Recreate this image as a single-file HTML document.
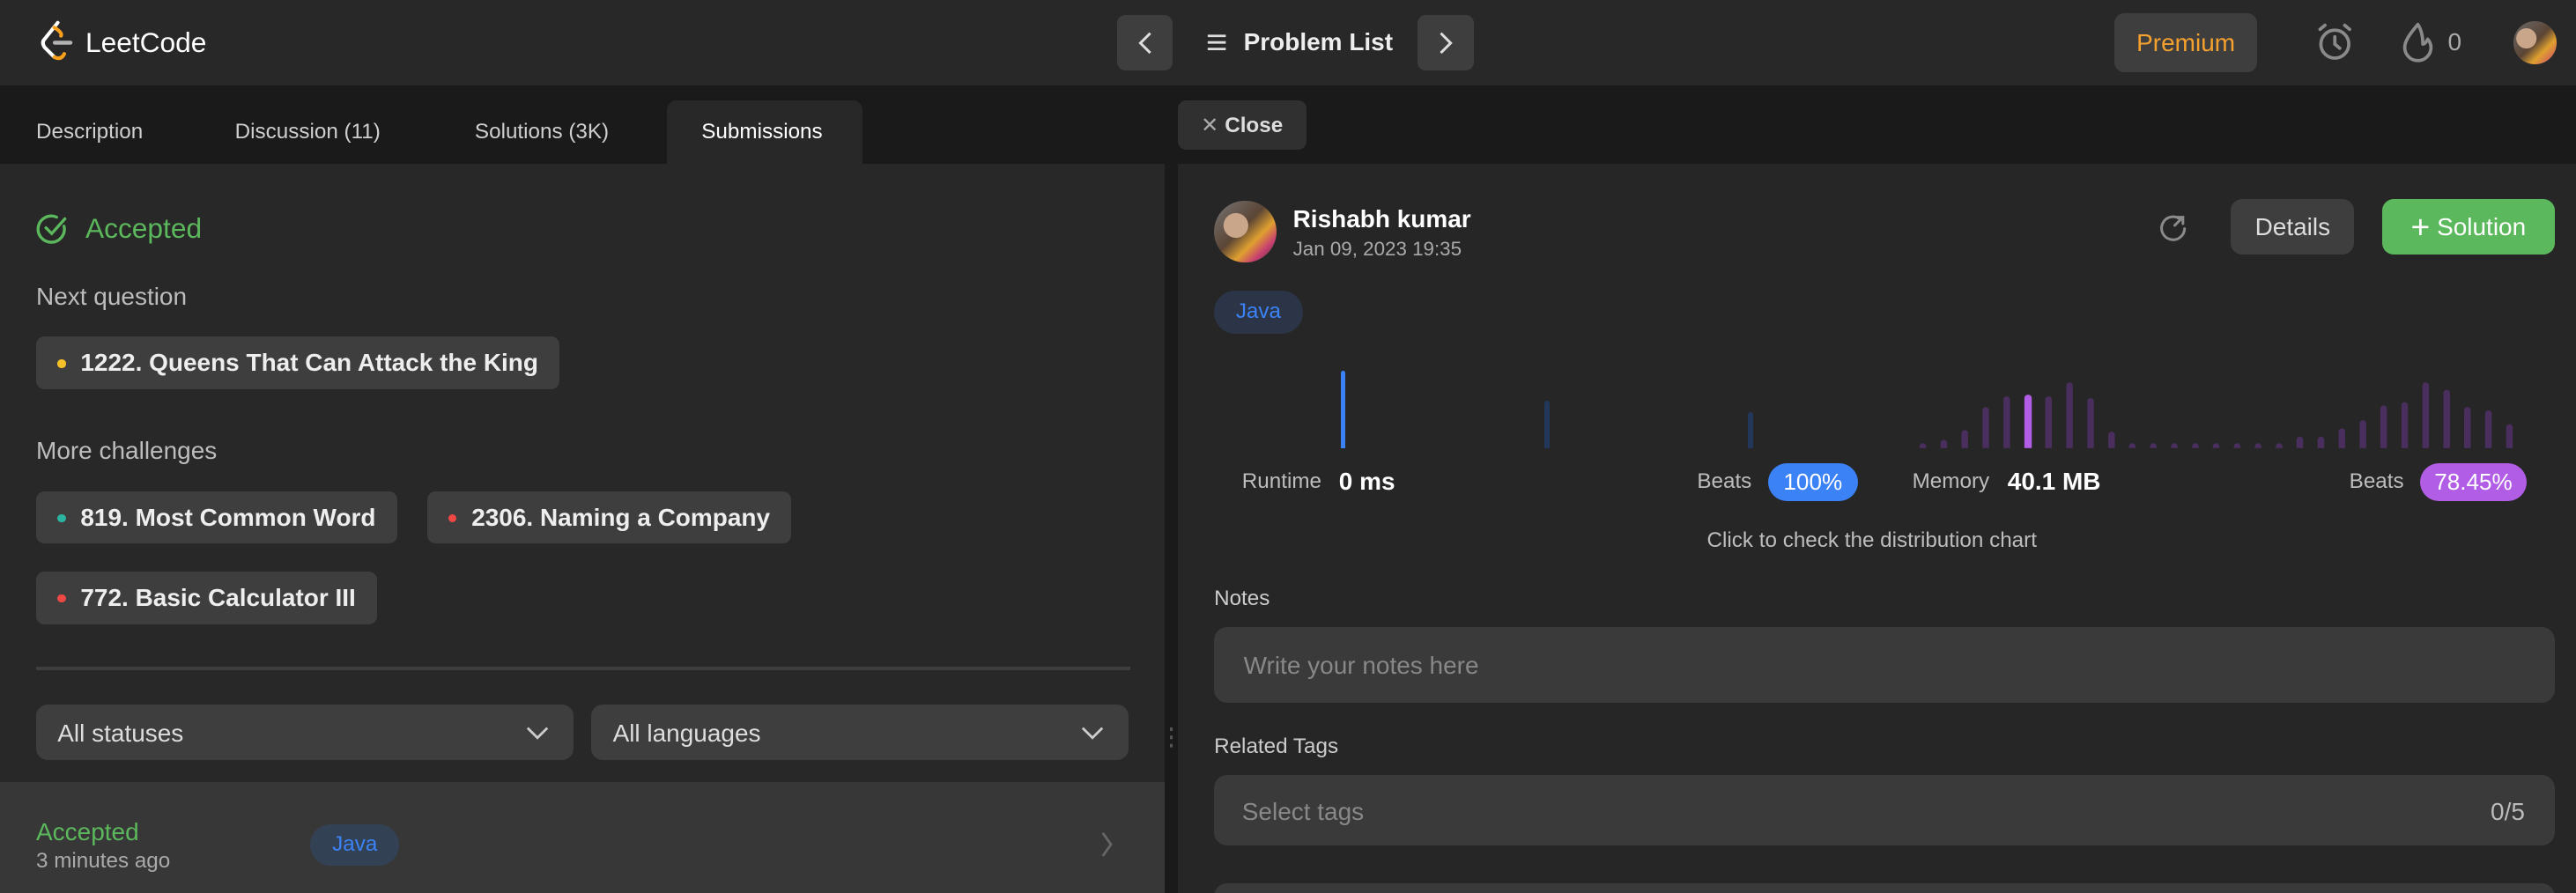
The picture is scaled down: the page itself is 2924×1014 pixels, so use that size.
<!DOCTYPE html>
<html><head><meta charset="utf-8"><style>
html,body{margin:0;padding:0;background:#1a1a1a;width:2924px;height:1014px;overflow:hidden}
#w{zoom:1.8648;width:1568px;height:544px;position:relative;font-family:"Liberation Sans",sans-serif;color:#eee;overflow:hidden}
.a{position:absolute}
.t{white-space:nowrap}
.chip{position:absolute;background:#3e3e3e;border-radius:5px;height:32px;font-size:15px;font-weight:bold;color:#eee;line-height:32px;padding:0 13px 0 27px;white-space:nowrap}
.chip i{position:absolute;left:13px;top:14px;width:5px;height:5px;border-radius:50%}
.bar{position:absolute;bottom:271px;width:3px;border-radius:2px 2px 0 0}
</style></head><body><div id="w">
<div class="a" style="left:0;top:0;width:1568px;height:52px;background:#282828"></div>
<svg class="a" style="left:24px;top:12px" width="22" height="26" viewBox="0 0 22 26"><path d="M11 2 L3 12 Q1 14 3 17 L9 23" stroke="#fff" stroke-width="2.2" fill="none" stroke-linecap="round"/><path d="M9 5 Q14 8 13 10 M9 23 Q13 25 15 21" stroke="#f89f1b" stroke-width="2.2" fill="none" stroke-linecap="round"/><rect x="8" y="13" width="12" height="2.4" rx="1.2" fill="#b3b3b3"/></svg>
<div class="a t" style="left:52px;top:16px;font-size:17px;color:#fff">LeetCode</div>
<div class="a" style="left:680px;top:9px;width:34px;height:34px;background:#3e3e3e;border-radius:5px"></div>
<svg class="a" style="left:690px;top:18px" width="14" height="16"><path d="M10 2 L4 8 L10 14" stroke="#ddd" stroke-width="1.6" fill="none"/></svg>
<svg class="a" style="left:734px;top:20px" width="13" height="12"><path d="M1 2H12M1 6H12M1 10H12" stroke="#ddd" stroke-width="1.5"/></svg>
<div class="a t" style="left:757px;top:17px;font-size:15px;font-weight:bold;color:#eee">Problem List</div>
<div class="a" style="left:863px;top:9px;width:34px;height:34px;background:#3e3e3e;border-radius:5px"></div>
<svg class="a" style="left:873px;top:18px" width="14" height="16"><path d="M4 2 L10 8 L4 14" stroke="#ddd" stroke-width="1.6" fill="none"/></svg>
<div class="a t" style="left:1287px;top:8px;width:87px;height:36px;background:#3e3e3e;border-radius:6px;color:#f5a12e;font-size:15px;line-height:36px;text-align:center">Premium</div>
<svg class="a" style="left:1408px;top:13px" width="26" height="26" viewBox="0 0 26 26"><circle cx="13" cy="14" r="8.5" stroke="#8a8a8a" stroke-width="2" fill="none"/><path d="M13 9.5V14L16 16.5M4 5L7 2.5M22 5L19 2.5" stroke="#8a8a8a" stroke-width="2" fill="none" stroke-linecap="round"/></svg>
<svg class="a" style="left:1461px;top:13px" width="22" height="26" viewBox="0 0 22 26"><path d="M11 2 C 6 8 3 12 3 16 a8 8 0 0 0 16 0 c0-2-1-4-2-5 c-1 2-2 3-3 3 C14 9 13 5 11 2Z" stroke="#8a8a8a" stroke-width="2" fill="none" stroke-linejoin="round"/></svg>
<div class="a t" style="left:1490px;top:17px;font-size:15px;color:#aaa">0</div>
<div class="a" style="left:1530px;top:13px;width:26px;height:26px;border-radius:50%;background:radial-gradient(circle at 30% 40%,#c9a58a 0 25%,transparent 26%),linear-gradient(135deg,#6a6a6a,#5b4535 50%,#e0a030 70%,#c84070)"></div>

<div class="a" style="left:406px;top:61px;width:119px;height:39px;background:#282828;border-radius:6px 6px 0 0"></div>
<div class="a t" style="left:22px;top:73px;font-size:13px;color:#cfcfcf">Description</div>
<div class="a t" style="left:143px;top:73px;font-size:13px;color:#cfcfcf">Discussion (11)</div>
<div class="a t" style="left:289px;top:73px;font-size:13px;color:#cfcfcf">Solutions (3K)</div>
<div class="a t" style="left:427px;top:73px;font-size:13px;color:#fff">Submissions</div>
<div class="a" style="left:717px;top:61px;width:78px;height:30px;background:#303030;border-radius:5px"></div>
<div class="a t" style="left:731px;top:68px;font-size:13px;color:#ddd;font-weight:bold"><span style="font-weight:normal;color:#aaa">✕</span> Close</div>

<div class="a" style="left:0;top:100px;width:709px;height:444px;background:#282828"></div>
<svg class="a" style="left:22px;top:129px" width="20" height="20" viewBox="0 0 20 20"><path d="M17 8.5 A8 8 0 1 1 12.5 3" stroke="#5cb85c" stroke-width="1.8" fill="none" stroke-linecap="round"/><path d="M6 9.5 L9.5 13 L17.5 4" stroke="#5cb85c" stroke-width="1.8" fill="none" stroke-linecap="round"/></svg>
<div class="a t" style="left:52px;top:129px;font-size:17px;color:#5cb85c">Accepted</div>
<div class="a t" style="left:22px;top:172px;font-size:15px;color:#bdbdbd">Next question</div>
<div class="chip" style="left:22px;top:205px"><i style="background:#f5c027"></i>1222. Queens That Can Attack the King</div>
<div class="a t" style="left:22px;top:266px;font-size:15px;color:#bdbdbd">More challenges</div>
<div class="chip" style="left:22px;top:299px"><i style="background:#2bb5a0"></i>819. Most Common Word</div>
<div class="chip" style="left:260px;top:299px"><i style="background:#ef4743"></i>2306. Naming a Company</div>
<div class="chip" style="left:22px;top:348px"><i style="background:#ef4743"></i>772. Basic Calculator III</div>
<div class="a" style="left:22px;top:406px;width:666px;height:2px;background:#3e3e3e"></div>
<div class="a" style="left:22px;top:429px;width:327px;height:34px;background:#3e3e3e;border-radius:7px"></div>
<div class="a t" style="left:35px;top:438px;font-size:15px;color:#ddd">All statuses</div>
<svg class="a" style="left:320px;top:440px" width="14" height="12"><path d="M1 3L7 9L13 3" stroke="#ccc" stroke-width="1.5" fill="none"/></svg>
<div class="a" style="left:360px;top:429px;width:327px;height:34px;background:#3e3e3e;border-radius:7px"></div>
<div class="a t" style="left:373px;top:438px;font-size:15px;color:#ddd">All languages</div>
<svg class="a" style="left:658px;top:440px" width="14" height="12"><path d="M1 3L7 9L13 3" stroke="#ccc" stroke-width="1.5" fill="none"/></svg>
<div class="a" style="left:0;top:476px;width:709px;height:68px;background:#373737"></div>
<div class="a t" style="left:22px;top:498px;font-size:15px;color:#5cb85c">Accepted</div>
<div class="a t" style="left:22px;top:517px;font-size:13px;color:#aaa">3 minutes ago</div>
<div class="a t" style="left:189px;top:502px;width:54px;height:25px;background:#334155;border-radius:13px;font-size:13px;color:#3b82f6;line-height:25px;text-align:center">Java</div>
<svg class="a" style="left:669px;top:506px" width="10" height="16"><path d="M2 1L7 8L2 15" stroke="#666" stroke-width="1.5" fill="none"/></svg>
<div class="a" style="left:712px;top:443px;width:2px;height:2px;background:#555;box-shadow:0 5px #555,0 10px #555"></div>

<div class="a" style="left:717px;top:100px;width:851px;height:444px;background:#262626"></div>
<div class="a" style="left:739px;top:122px;width:38px;height:38px;border-radius:50%;background:radial-gradient(circle at 35% 40%,#c9a58a 0 22%,transparent 23%),linear-gradient(135deg,#777,#5b4535 45%,#e0a030 65%,#c84070 80%,#333)"></div>
<div class="a t" style="left:787px;top:125px;font-size:15px;font-weight:bold;color:#fff">Rishabh kumar</div>
<div class="a t" style="left:787px;top:145px;font-size:12px;color:#aaa">Jan 09, 2023 19:35</div>
<svg class="a" style="left:1313px;top:129px" width="20" height="20" viewBox="0 0 20 20"><path d="M14 4 A7 7 0 1 0 17 10" stroke="#8a8a8a" stroke-width="1.6" fill="none" stroke-linecap="round"/><path d="M12 3H16V7M16 3L11 8" stroke="#8a8a8a" stroke-width="1.6" fill="none" stroke-linecap="round"/></svg>
<div class="a t" style="left:1358px;top:121px;width:75px;height:34px;background:#3e3e3e;border-radius:7px;color:#ddd;font-size:15px;line-height:34px;text-align:center">Details</div>
<div class="a t" style="left:1450px;top:121px;width:105px;height:34px;background:#5cb85c;border-radius:7px;color:#fff;font-size:15px;line-height:34px;text-align:center"><span style="font-size:20px;vertical-align:-2px">+</span> Solution</div>
<div class="a t" style="left:739px;top:177px;width:54px;height:26px;background:#2b3547;border-radius:13px;font-size:13px;color:#3b82f6;line-height:26px;text-align:center">Java</div>
<div class="bar" style="left:816px;height:47px;background:#3b82f6"></div>
<div class="bar" style="left:940px;height:29px;background:#22375a"></div>
<div class="bar" style="left:1064px;height:22px;background:#22375a"></div>
<div class="a t" style="left:756px;top:286px;font-size:13px;color:#bdbdbd">Runtime</div>
<div class="a t" style="left:815px;top:285px;font-size:15px;font-weight:bold;color:#fff">0 ms</div>
<div class="a t" style="left:1033px;top:286px;font-size:13px;color:#bdbdbd">Beats</div>
<div class="a t" style="left:1076px;top:282px;width:55px;height:23px;background:#3b82f6;border-radius:12px;font-size:14px;color:#fff;line-height:23px;text-align:center">100%</div>
<div class="a t" style="left:1164px;top:286px;font-size:13px;color:#bdbdbd">Memory</div>
<div class="a t" style="left:1222px;top:285px;font-size:15px;font-weight:bold;color:#fff">40.1 MB</div>
<div class="a t" style="left:1430px;top:286px;font-size:13px;color:#bdbdbd">Beats</div>
<div class="a t" style="left:1473px;top:282px;width:65px;height:23px;background:#b15de6;border-radius:12px;font-size:14px;color:#fff;line-height:23px;text-align:center">78.45%</div>
<div class="a t" style="left:1039px;top:322px;font-size:13px;color:#bdbdbd">Click to check the distribution chart</div>
<div class="a t" style="left:739px;top:357px;font-size:13px;color:#ccc">Notes</div>
<div class="a" style="left:739px;top:382px;width:816px;height:46px;background:#3a3a3a;border-radius:8px"></div>
<div class="a t" style="left:757px;top:397px;font-size:15px;color:#888">Write your notes here</div>
<div class="a t" style="left:739px;top:447px;font-size:13px;color:#ccc">Related Tags</div>
<div class="a" style="left:739px;top:472px;width:816px;height:43px;background:#3a3a3a;border-radius:8px"></div>
<div class="a t" style="left:756px;top:486px;font-size:15px;color:#888">Select tags</div>
<div class="a t" style="left:1516px;top:486px;font-size:15px;color:#bbb">0/5</div>
<div class="a" style="left:739px;top:538px;width:816px;height:20px;background:#3a3a3a;border-radius:8px"></div>
<svg class="a" style="left:1160px;top:220px" width="380" height="60" viewBox="1160 220 380 60">
<g fill="#4a2f5e">
<rect x="1168.5" y="270" width="4" height="5" rx="2"/><rect x="1181.3" y="268" width="4" height="7" rx="2"/><rect x="1194" y="262" width="4" height="13" rx="2"/><rect x="1206.8" y="248" width="4" height="27" rx="2"/><rect x="1219.6" y="241.5" width="4" height="33.5" rx="2"/><rect x="1245" y="241.5" width="4" height="33.5" rx="2"/><rect x="1257.8" y="233" width="4" height="42" rx="2"/><rect x="1270.6" y="242.5" width="4" height="32.5" rx="2"/><rect x="1283.4" y="263" width="4" height="12" rx="2"/>
<rect x="1296" y="270" width="4" height="5" rx="2"/><rect x="1308.8" y="270" width="4" height="5" rx="2"/><rect x="1321.6" y="270" width="4" height="5" rx="2"/><rect x="1334.4" y="270" width="4" height="5" rx="2"/><rect x="1347" y="270" width="4" height="5" rx="2"/><rect x="1359.8" y="270" width="4" height="5" rx="2"/><rect x="1372.6" y="270" width="4" height="5" rx="2"/><rect x="1385.4" y="270" width="4" height="5" rx="2"/>
<rect x="1398" y="266" width="4" height="9" rx="2"/><rect x="1410.8" y="266" width="4" height="9" rx="2"/><rect x="1423.6" y="261" width="4" height="14" rx="2"/><rect x="1436.4" y="256" width="4" height="19" rx="2"/><rect x="1449" y="247" width="4" height="28" rx="2"/><rect x="1461.8" y="245" width="4" height="30" rx="2"/><rect x="1474.6" y="233" width="4" height="42" rx="2"/><rect x="1487.4" y="237.5" width="4" height="37.5" rx="2"/><rect x="1500" y="248" width="4" height="27" rx="2"/><rect x="1512.8" y="250" width="4" height="25" rx="2"/><rect x="1525.6" y="258.5" width="4" height="16.5" rx="2"/>
</g>
<rect x="1232.3" y="240.5" width="4.5" height="34.5" rx="2" fill="#b15de6"/>
<rect x="1160" y="273" width="380" height="4" fill="#262626"/>
</svg>
</div></body></html>
